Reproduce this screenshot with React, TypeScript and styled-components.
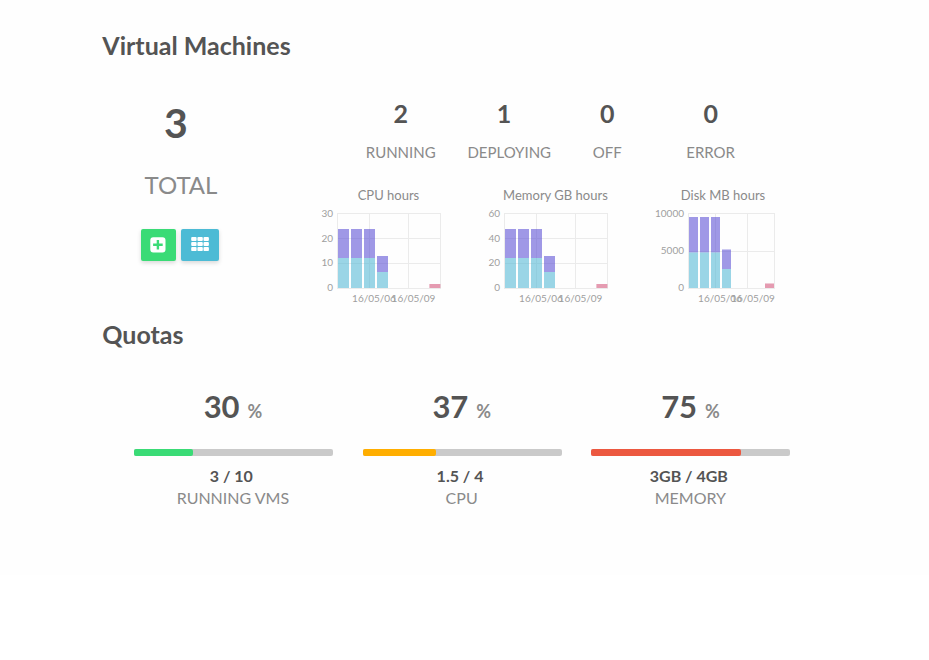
import React from "react";
import styled, { createGlobalStyle } from "styled-components";

const GlobalStyle = createGlobalStyle`
  * { box-sizing: border-box; }
  body {
    margin: 0;
    background: #fff;
    color: #8a8a8a;
    font-family: Lato, "Liberation Sans", sans-serif;
  }
`;

const Dashboard = styled.main`
  height: 575px;
  padding: 29px 122px 0 102px;
  background: #fefefe;
`;

const SectionTitle = styled.h2`
  margin: 0 0 0 0.3px;
  height: 32px;
  font-size: 25px;
  line-height: 32px;
  font-weight: 700;
  color: #545454;
`;

const Machines = styled.section`
  display: flex;
  height: 257px;
`;

const Summary = styled.div`
  display: flex;
  flex-direction: column;
  align-items: center;
  width: 157px;
  padding-top: 37px;
  margin-right: 46px;
`;

const TotalCount = styled.div`
  height: 50px;
  margin-right: 9px;
  font-size: 41px;
  line-height: 50px;
  font-weight: 700;
  color: #545454;
`;

const TotalLabel = styled.div`
  height: 32px;
  margin: 21px 0 0 1px;
  font-size: 24px;
  line-height: 32px;
`;

const Actions = styled.div`
  display: flex;
  gap: 5px;
  margin: 28px 0 0 -1px;
`;

const ActionButton = styled.button<{ $color: string; $width: number }>`
  display: flex;
  align-items: flex-start;
  justify-content: center;
  width: ${(p) => p.$width}px;
  height: 32px;
  padding: 8px 0 0;
  border: 0;
  border-radius: 2px;
  background: ${(p) => p.$color};
  box-shadow: 0 2px 4px rgba(0, 0, 0, 0.15);
`;

const Details = styled.div`
  width: 502px;
  padding-top: 36px;
`;

const States = styled.div`
  display: grid;
  grid-template-columns: repeat(4, 103.3px);
  justify-content: center;
  text-align: center;
`;

const State = styled.div`
  padding: 0 15.3px 0 14.7px;
`;

const StateCount = styled.div`
  height: 32px;
  font-size: 25px;
  line-height: 32px;
  font-weight: 700;
  color: #545454;
`;

const StateLabel = styled.div`
  height: 20px;
  margin-top: 13px;
  font-size: 15px;
  line-height: 20px;
`;

const Charts = styled.div`
  display: grid;
  grid-template-columns: 166.9px 167.1px 168px;
  margin-top: 23px;
`;

const ChartTitle = styled.div`
  height: 20px;
  font-size: 13px;
  line-height: 20px;
  text-align: center;
`;

const Plot = styled.svg`
  display: block;
  font-family: Lato, "Liberation Sans", sans-serif;
  font-size: 10px;
  fill: #9e9e9e;
`;

const Quotas = styled.section`
  display: grid;
  grid-template-columns: repeat(3, 199px);
  column-gap: 29.75px;
  margin: 36px 0 0 31.8px;
  text-align: center;
`;

const Percent = styled.div`
  height: 40px;
  margin-right: 0.8px;
  font-size: 31px;
  line-height: 40px;
  font-weight: 700;
  color: #545454;
`;

const PercentSign = styled.span`
  margin-left: 7.8px;
  font-size: 18px;
  color: #8a8a8a;
`;

const Meter = styled.div`
  height: 7px;
  margin-top: 23px;
  border-radius: 2px;
  background: #cacaca;
`;

const MeterFill = styled.div<{ $color: string }>`
  height: 7px;
  border-radius: 2px;
  background: ${(p) => p.$color};
`;

const Usage = styled.div`
  height: 20px;
  margin: 10px 4px 0 0;
  font-size: 16px;
  line-height: 20px;
  font-weight: 700;
  color: #545454;
`;

const QuotaName = styled.div`
  height: 20px;
  margin: 2px 0.8px 0 0;
  font-size: 16px;
  line-height: 20px;
`;

type Bar = { x: number; w: number; top: number; mid?: number };
type ChartData = {
  title: string;
  left: number;
  right: number;
  verticals: number[];
  ticks: { label: string; y: number; baseline: number }[];
  dates: number[];
  bars: Bar[];
};

const BASE = 83;

const hourBars: Bar[] = [
  { x: 33, w: 11, top: 24, mid: 53 },
  { x: 46, w: 11, top: 24, mid: 53 },
  { x: 59, w: 11, top: 24, mid: 53 },
  { x: 72, w: 11, top: 51, mid: 67 },
  { x: 124.4, w: 11, top: 79 },
];

const ticksFor = (labels: string[]) =>
  labels.map((label, i) => ({
    label,
    y: 8.5 + Math.round((i * 75) / (labels.length - 1)),
    baseline: 12 + Math.floor((i * 74) / (labels.length - 1) + 0.4),
  }));

const charts: ChartData[] = [
  {
    title: "CPU hours",
    left: 32.5,
    right: 135.5,
    verticals: [64.5, 103.5],
    ticks: ticksFor(["30", "20", "10", "0"]),
    dates: [69, 108.5],
    bars: hourBars,
  },
  {
    title: "Memory GB hours",
    left: 32.5,
    right: 135.5,
    verticals: [64.5, 103.5],
    ticks: ticksFor(["60", "40", "20", "0"]),
    dates: [69, 108.5],
    bars: hourBars,
  },
  {
    title: "Disk MB hours",
    left: 49.5,
    right: 135.5,
    verticals: [76.5, 108.5],
    ticks: ticksFor(["10000", "5000", "0"]),
    dates: [81, 114],
    bars: [
      { x: 50, w: 9, top: 12, mid: 47.5 },
      { x: 61, w: 9, top: 12, mid: 47.5 },
      { x: 72, w: 9, top: 12, mid: 47.5 },
      { x: 83, w: 9, top: 44.5, mid: 64 },
      { x: 126, w: 9, top: 78.5 },
    ],
  },
];

function UsageChart({ data }: { data: ChartData }) {
  const { left, right } = data;
  return (
    <div>
      <ChartTitle>{data.title}</ChartTitle>
      <Plot width="167" height="104" viewBox="0 0 167 104">
        <g stroke="#ebebeb" strokeWidth="1">
          {data.ticks.map((t) => (
            <line key={t.label} x1={left} x2={right} y1={t.y} y2={t.y} />
          ))}
          {[left, ...data.verticals, right].map((x) => (
            <line key={x} x1={x} x2={x} y1="8" y2="84" />
          ))}
        </g>
        {data.bars.map((b) => (
          <g key={b.x} fillOpacity="0.6">
            {b.mid !== undefined ? (
              <>
                <rect x={b.x} y={b.top} width={b.w} height={b.mid - b.top} fill="#5f53d5" />
                <rect x={b.x} y={b.mid} width={b.w} height={BASE - b.mid} fill="#57b9d5" />
              </>
            ) : (
              <rect x={b.x} y={b.top} width={b.w} height={BASE - b.top} fill="#d4587d" />
            )}
          </g>
        ))}
        {data.ticks.map((t) => (
          <text key={t.label} x={left - 4.5} y={t.baseline} textAnchor="end">
            {t.label}
          </text>
        ))}
        <text x={data.dates[0]} y="97" textAnchor="middle">16/05/06</text>
        <text x={data.dates[1]} y="97" textAnchor="middle">16/05/09</text>
      </Plot>
    </div>
  );
}

const states = [
  { count: 2, label: "RUNNING" },
  { count: 1, label: "DEPLOYING" },
  { count: 0, label: "OFF" },
  { count: 0, label: "ERROR" },
];

const quotas = [
  { percent: 30, fill: 29.6, usage: "3 / 10", name: "RUNNING VMS", color: "#3adb76" },
  { percent: 37, fill: 36.8, usage: "1.5 / 4", name: "CPU", color: "#ffae00" },
  { percent: 75, fill: 75.3, usage: "3GB / 4GB", name: "MEMORY", color: "#ec5840" },
];

function PlusSquareIcon() {
  return (
    <svg width="17" height="16" viewBox="0 0 17 16" fill="#fff">
      <path
        fillRule="evenodd"
        d="M3.3 .2h9.200a3 3 0 0 1 3 3v9.200a3 3 0 0 1-3 3H3.300a3 3 0 0 1-3-3V3.200a3 3 0 0 1 3-3ZM6.700 3v3.600H3.100v2.400h3.600v3.600h2.400V9h3.600V6.600H9.100V3Z"
      />
    </svg>
  );
}

function GridIcon() {
  return (
    <svg width="18" height="14" viewBox="0 0 18 14" fill="#fff">
      {[0, 5, 10].map((y) =>
        [0.2, 6.4, 12.5].map((x) => (
          <rect key={`${x}-${y}`} x={x} y={y} width="5.4" height="4.1" rx="1" />
        ))
      )}
    </svg>
  );
}

export default function App() {
  return (
    <>
      <GlobalStyle />
      <Dashboard>
        <SectionTitle>Virtual Machines</SectionTitle>
        <Machines>
          <Summary>
            <TotalCount>3</TotalCount>
            <TotalLabel>TOTAL</TotalLabel>
            <Actions>
              <ActionButton $color="#3adb76" $width={35} aria-label="Create">
                <PlusSquareIcon />
              </ActionButton>
              <ActionButton $color="#4dbbd5" $width={38} aria-label="List">
                <GridIcon />
              </ActionButton>
            </Actions>
          </Summary>
          <Details>
            <States>
              {states.map((s) => (
                <State key={s.label}>
                  <StateCount>{s.count}</StateCount>
                  <StateLabel>{s.label}</StateLabel>
                </State>
              ))}
            </States>
            <Charts>
              {charts.map((c) => (
                <UsageChart key={c.title} data={c} />
              ))}
            </Charts>
          </Details>
        </Machines>
        <SectionTitle>Quotas</SectionTitle>
        <Quotas>
          {quotas.map((q) => (
            <div key={q.name}>
              <Percent>
                {q.percent}
                <PercentSign>%</PercentSign>
              </Percent>
              <Meter>
                <MeterFill $color={q.color} style={{ width: `${q.fill}%` }} />
              </Meter>
              <Usage>{q.usage}</Usage>
              <QuotaName>{q.name}</QuotaName>
            </div>
          ))}
        </Quotas>
      </Dashboard>
    </>
  );
}
